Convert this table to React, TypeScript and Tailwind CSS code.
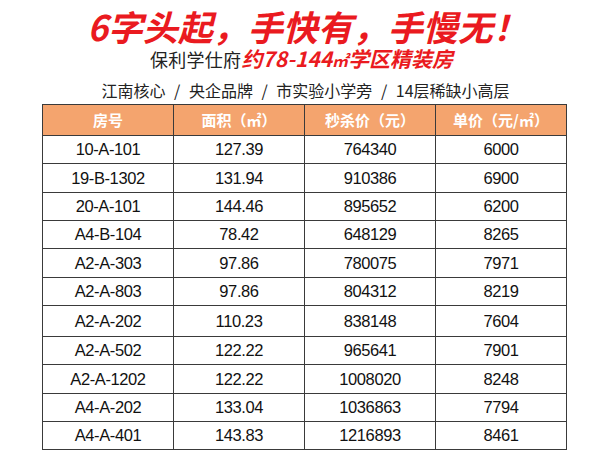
const rows = [
  { id: "10-A-101", area: "127.39", price: "764340", unit: "6000", h: "h-[28px]" },
  { id: "19-B-1302", area: "131.94", price: "910386", unit: "6900", h: "h-[29px]" },
  { id: "20-A-101", area: "144.46", price: "895652", unit: "6200", h: "h-[28px]" },
  { id: "A4-B-104", area: "78.42", price: "648129", unit: "8265", h: "h-[28px]" },
  { id: "A2-A-303", area: "97.86", price: "780075", unit: "7971", h: "h-[29px]" },
  { id: "A2-A-803", area: "97.86", price: "804312", unit: "8219", h: "h-[28px]" },
  { id: "A2-A-202", area: "110.23", price: "838148", unit: "7604", h: "h-[31px]" },
  { id: "A2-A-502", area: "122.22", price: "965641", unit: "7901", h: "h-[28px]" },
  { id: "A2-A-1202", area: "122.22", price: "1008020", unit: "8248", h: "h-[29px]" },
  { id: "A4-A-202", area: "133.04", price: "1036863", unit: "7794", h: "h-[28px]" },
  { id: "A4-A-401", area: "143.83", price: "1216893", unit: "8461", h: "h-[28px]" },
];

const cjk = "font-['Noto_Sans_CJK_SC',sans-serif]";
const cell = "border-[1.5px] border-[#3a3a3a] text-center";

export default function App() {
  return (
    <div className="w-[599px] h-[461px] bg-white overflow-hidden">
      <div className={`flex flex-col items-center pt-[5px] ${cjk}`}>
        <h1 className="text-[35px] leading-[42px] font-bold italic text-[#ea1a20] pl-[16px]">
          6字头起，手快有，手慢无！
        </h1>
        <p className="text-[18px] leading-[22px] text-[#222] pl-[4px] tracking-[0.3px]">
          保利学仕府
          <span className="text-[21px] leading-[22px] font-bold italic text-[#ea1a20] tracking-[0px]">
            约78-144<span className="text-[16px]">㎡</span>学区精装房
          </span>
        </p>
        <p className="text-[16px] leading-[24px] text-[#222] mt-[7px] pl-[12px] [word-spacing:5px]">
          江南核心 / 央企品牌 / 市实验小学旁 / 14层稀缺小高层
        </p>
      </div>

      <table className="ml-[42px] mt-[2px] w-[525px] border-collapse table-fixed">
        <thead>
          <tr className={`h-[31px] bg-[#f4a46e] text-white font-bold text-[15px] ${cjk}`}>
            <th className={cell}>房号</th>
            <th className={cell}>面积（㎡）</th>
            <th className={cell}>秒杀价（元）</th>
            <th className={cell}>单价（元/㎡）</th>
          </tr>
        </thead>
        <tbody className="font-['Liberation_Sans',sans-serif] text-[16.5px] text-[#111] tracking-[-0.4px]">
          {rows.map((r) => (
            <tr key={r.id} className={r.h}>
              <td className={cell}>{r.id}</td>
              <td className={cell}>{r.area}</td>
              <td className={cell}>{r.price}</td>
              <td className={cell}>{r.unit}</td>
            </tr>
          ))}
        </tbody>
      </table>
    </div>
  );
}
